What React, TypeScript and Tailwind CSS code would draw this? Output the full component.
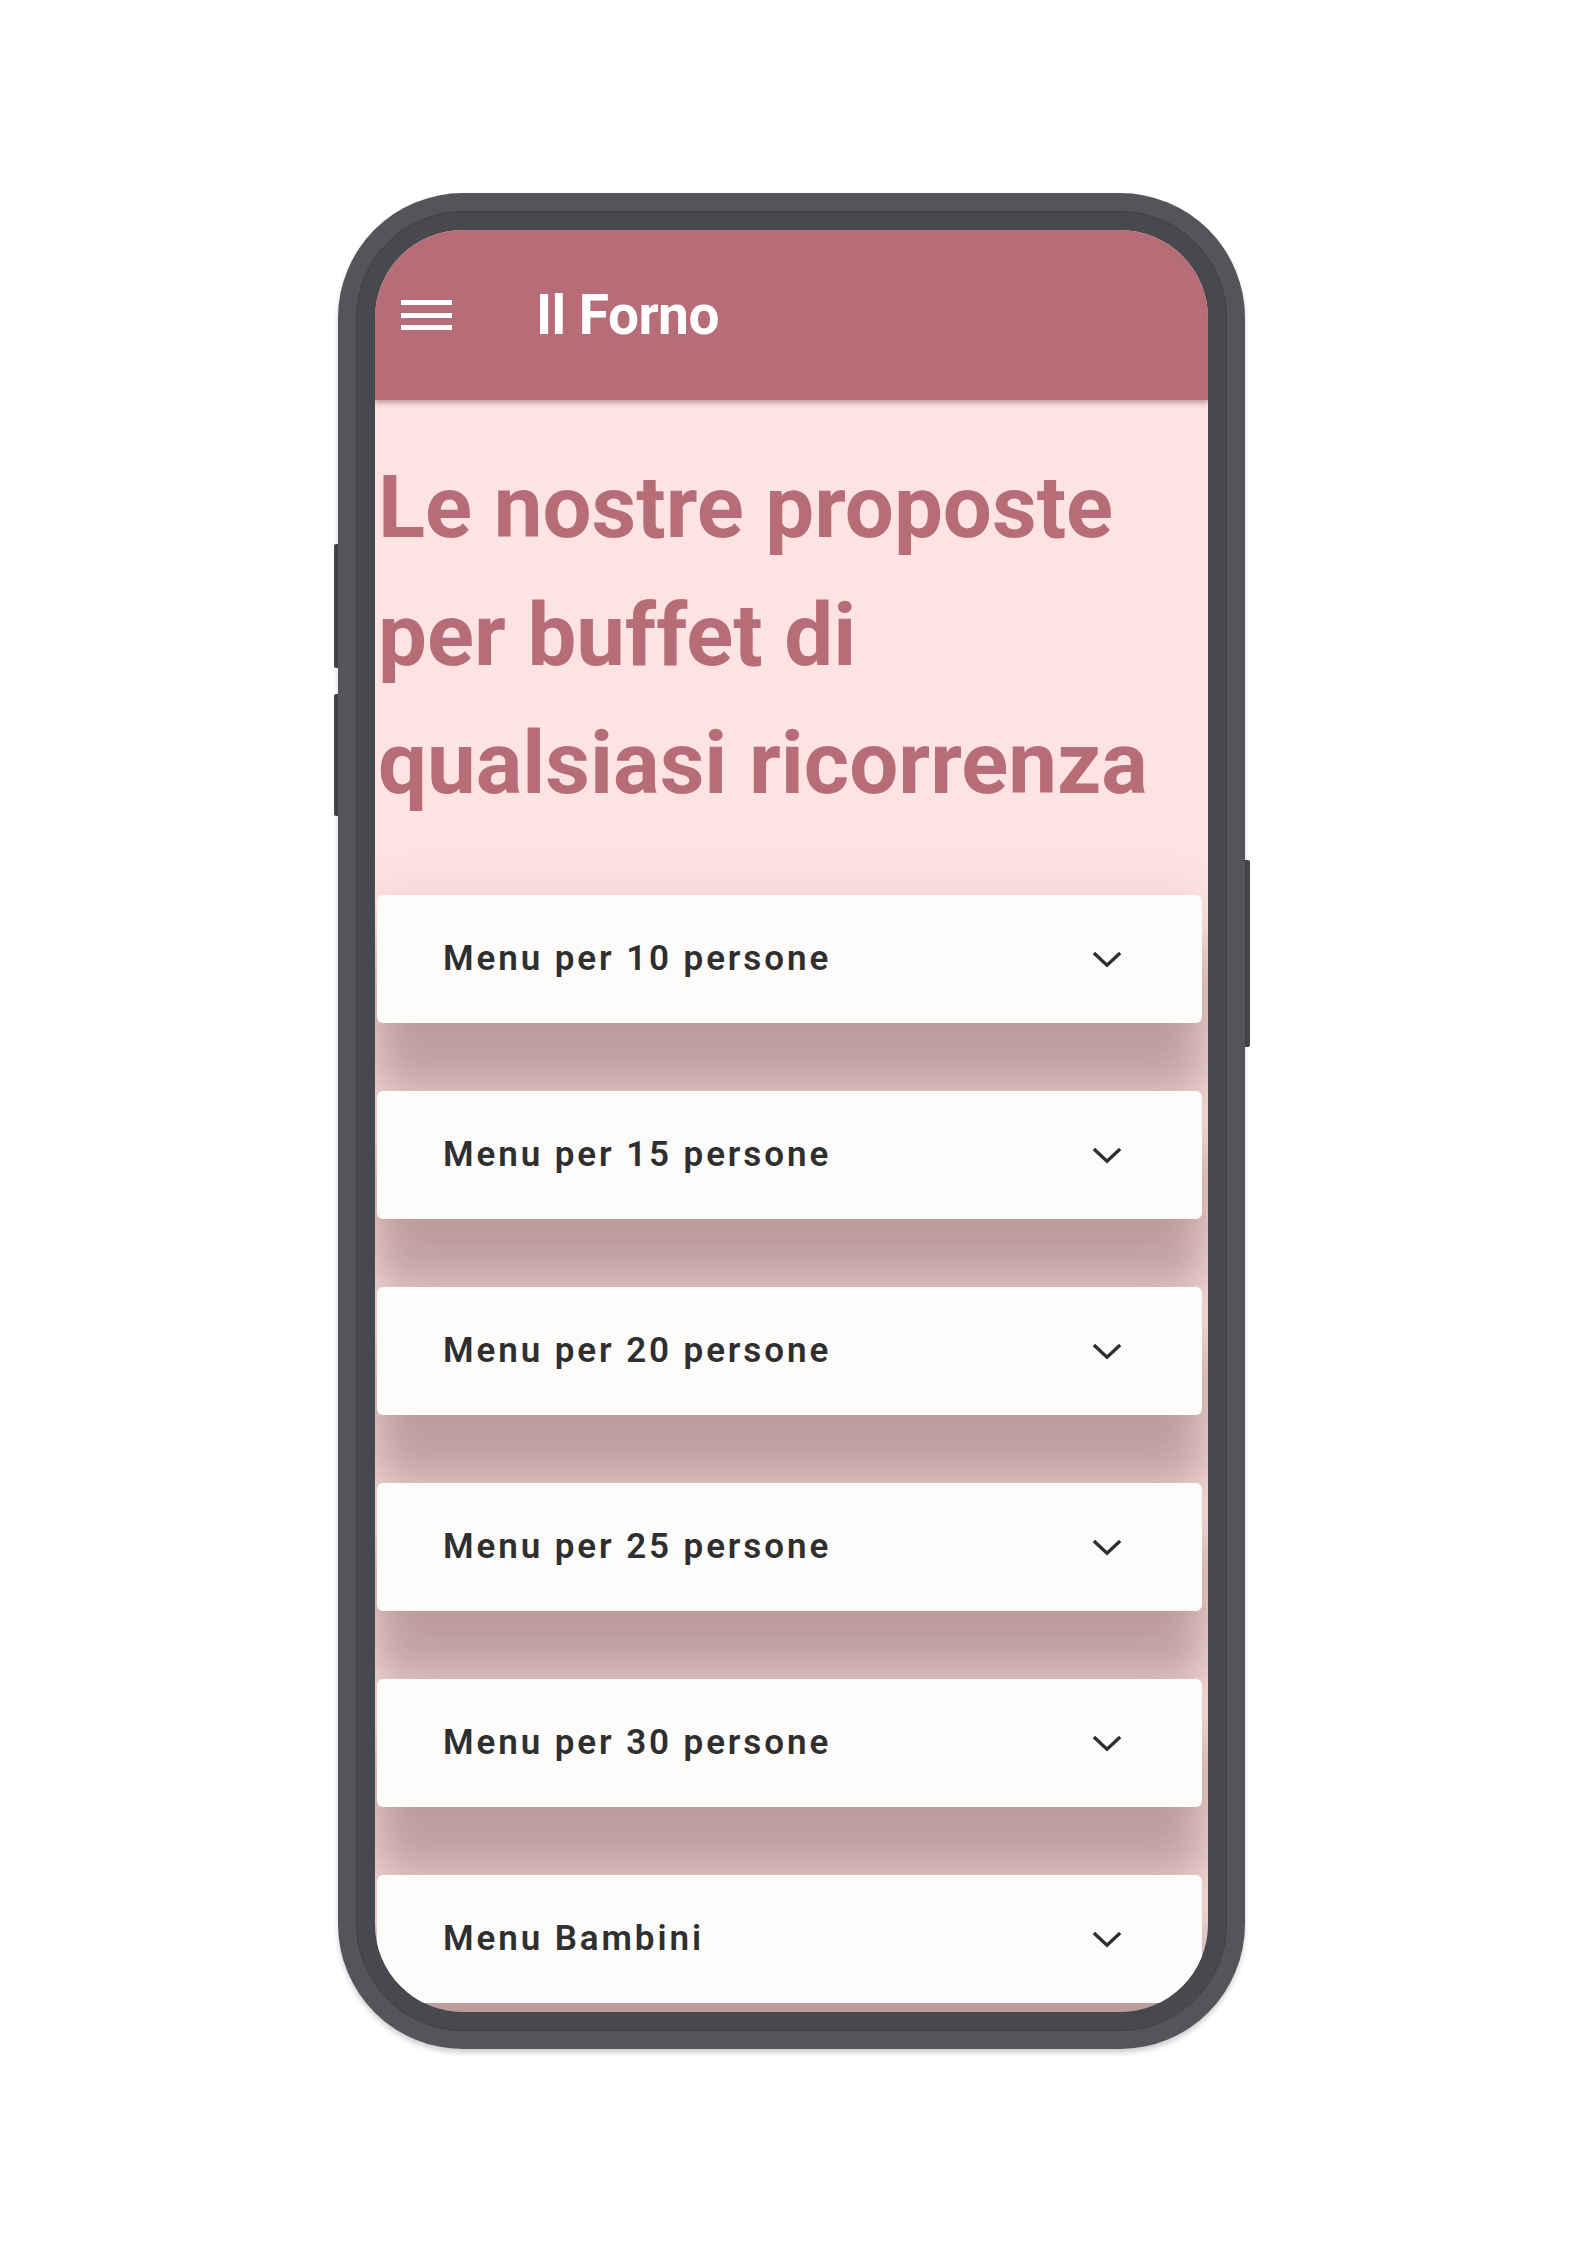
const MENUS = [
  "Menu per 10 persone",
  "Menu per 15 persone",
  "Menu per 20 persone",
  "Menu per 25 persone",
  "Menu per 30 persone",
  "Menu Bambini",
];

function ExpandMore() {
  return (
    <svg
      viewBox="0 0 32 18"
      className="h-[17px] w-[30px] fill-none stroke-[#2f2f2f] stroke-[3.6]"
    >
      <polyline points="2,2 16,15 30,2" />
    </svg>
  );
}

function MenuCard({ label }: { label: string }) {
  return (
    <div className="ml-[2px] mr-[6px] mb-[68px] flex h-[128px] items-center justify-between rounded-[6px] bg-[#fdfcfa] pl-[66px] pr-[80px] shadow-[0_62px_50px_8px_rgba(70,30,30,0.33),0_0_60px_rgba(90,30,30,0.08)]">
      <span className="text-[35px] font-semibold tracking-[2.9px] text-[#2f2f2f]">
        {label}
      </span>
      <ExpandMore />
    </div>
  );
}

export default function App() {
  return (
    <div className="min-h-[2245px] bg-white pl-[338px] pt-[193px] font-['Roboto',sans-serif]">
      <div className="relative w-[907px]">
        {/* side buttons */}
        <div className="absolute -left-[4px] top-[351px] h-[124px] w-[6px] rounded-l-[2px] bg-[#45464b]" />
        <div className="absolute -left-[4px] top-[501px] h-[122px] w-[6px] rounded-l-[2px] bg-[#45464b]" />
        <div className="absolute -right-[5px] top-[667px] h-[187px] w-[7px] rounded-r-[2px] bg-[#45464b]" />

        {/* frame */}
        <div className="relative rounded-[125px] bg-[#54555a] p-[18px] shadow-[0_4px_5px_rgba(0,0,0,0.18)]">
          <div className="rounded-[107px] border border-[#3f4044] bg-[#48494e] p-[18px]">
            <div className="flex h-[1782px] flex-col overflow-hidden rounded-[88px] bg-[#fde3e1]">
              {/* app bar */}
              <header className="relative z-10 flex h-[170px] shrink-0 items-center bg-[#b76d77] pl-[26px] shadow-[0_3px_5px_rgba(80,20,30,0.35)]">
                <div className="flex w-[51px] flex-col gap-[7.5px]">
                  <span className="h-[5px] bg-white" />
                  <span className="h-[5px] bg-white" />
                  <span className="h-[5px] bg-white" />
                </div>
                <h1 className="ml-[84px] text-[55px] font-bold leading-none tracking-[-0.5px] text-white">
                  Il Forno
                </h1>
              </header>

              {/* content */}
              <main className="pt-[43px]">
                <h2 className="pl-[3px] text-[87px] font-bold leading-[128px] text-[#b76d77]">
                  Le nostre proposte
                  <br />
                  per buffet di
                  <br />
                  qualsiasi ricorrenza
                </h2>
                <div className="mt-[68px]">
                  {MENUS.map((m) => (
                    <MenuCard key={m} label={m} />
                  ))}
                </div>
              </main>
            </div>
          </div>
        </div>
      </div>
    </div>
  );
}
